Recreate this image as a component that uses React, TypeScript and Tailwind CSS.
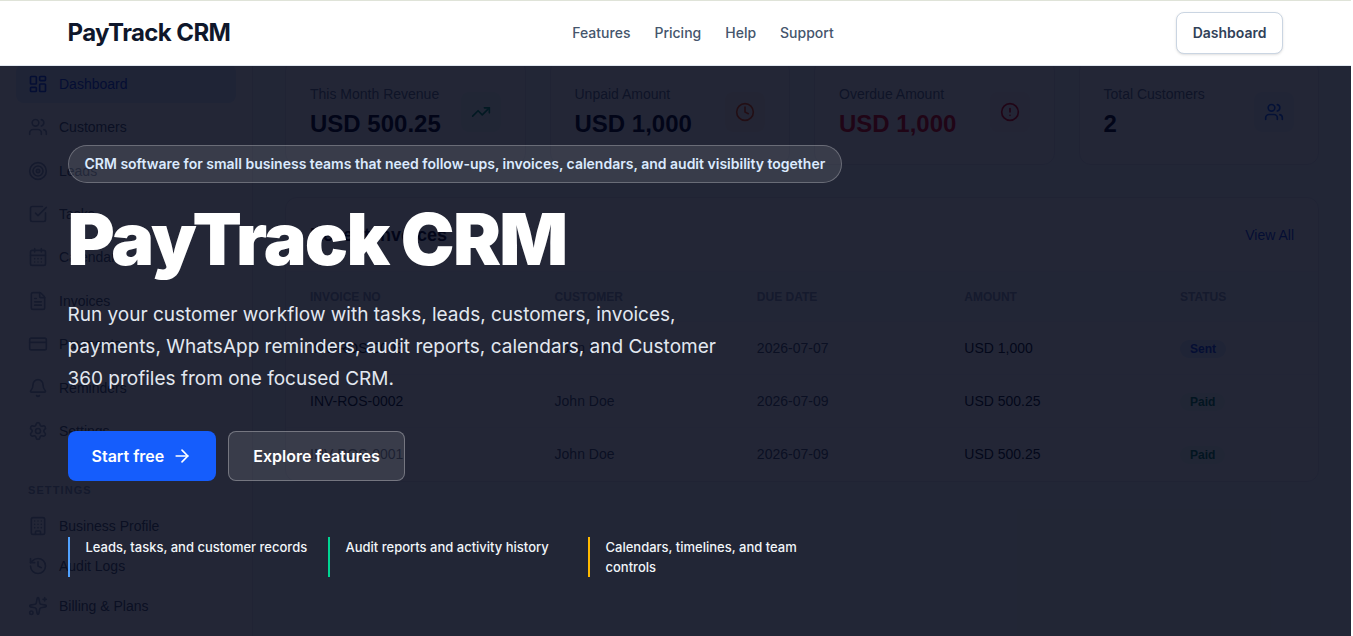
import {
    ArrowRight,
    Bell,
    Building,
    CalendarDays,
    CircleAlert,
    Clock,
    CreditCard,
    FileText,
    History,
    LayoutDashboard,
    Settings,
    Sparkles,
    SquareCheckBig,
    Target,
    TrendingUp,
    Users,
} from 'lucide-react'

const navLinks = ['Features', 'Pricing', 'Help', 'Support']

const sidebarItems = [
    { label: 'Dashboard', icon: LayoutDashboard, active: true },
    { label: 'Customers', icon: Users },
    { label: 'Leads', icon: Target },
    { label: 'Tasks', icon: SquareCheckBig },
    { label: 'Calendar', icon: CalendarDays },
    { label: 'Invoices', icon: FileText },
    { label: 'Payments', icon: CreditCard },
    { label: 'Reminders', icon: Bell },
    { label: 'Settings', icon: Settings },
]

const settingsItems = [
    { label: 'Business Profile', icon: Building },
    { label: 'Audit Logs', icon: History },
    { label: 'Billing & Plans', icon: Sparkles },
]

const stats = [
    { label: 'This Month Revenue', value: 'USD 500.25', icon: TrendingUp, valueClass: 'text-slate-950', iconClass: 'bg-emerald-50 text-emerald-600' },
    { label: 'Unpaid Amount', value: 'USD 1,000', icon: Clock, valueClass: 'text-slate-950', iconClass: 'bg-orange-50 text-orange-600' },
    { label: 'Overdue Amount', value: 'USD 1,000', icon: CircleAlert, valueClass: 'text-red-600', iconClass: 'bg-red-50 text-red-600' },
    { label: 'Total Customers', value: '2', icon: Users, valueClass: 'text-slate-950', iconClass: 'bg-blue-50 text-blue-600' },
]

const invoices = [
    { no: 'INV-ROS-0003', customer: 'John Doe', due: '2026-07-07', amount: 'USD 1,000', status: 'Sent' },
    { no: 'INV-ROS-0002', customer: 'John Doe', due: '2026-07-09', amount: 'USD 500.25', status: 'Paid' },
    { no: 'INV-ROS-0001', customer: 'John Doe', due: '2026-07-09', amount: 'USD 500.25', status: 'Paid' },
]

const highlights = [
    { text: 'Leads, tasks, and customer records', border: 'border-[#51a2ff]' },
    { text: 'Audit reports and activity history', border: 'border-[#00d492]' },
    { text: 'Calendars, timelines, and team controls', border: 'border-[#ffb900]' },
]

function Header() {
    return (
        <header className="border-t border-b border-t-[#dfe3d8] border-b-slate-200 bg-white">
            <div className="mx-auto flex h-16 max-w-7xl items-center justify-between px-8">
                <a href="#" className="text-2xl font-bold tracking-tight text-slate-900">
                    PayTrack CRM
                </a>
                <nav className="flex items-center gap-6">
                    {navLinks.map((link) => (
                        <a key={link} href="#" className="text-sm font-medium text-slate-600">
                            {link}
                        </a>
                    ))}
                </nav>
                <a
                    href="#"
                    className="rounded-lg border border-slate-300 bg-white px-4 py-2.5 text-sm font-semibold text-slate-700 shadow-sm"
                >
                    Dashboard
                </a>
            </div>
        </header>
    )
}

function Sidebar() {
    return (
        <div className="w-[253px] shrink-0 border-r border-slate-200 bg-white px-4">
            <ul className="-mt-1 flex h-[391px] flex-col">
                {sidebarItems.map(({ label, icon: Icon, active }) => (
                    <li key={label} className="flex flex-1 py-0.5">
                        <div
                            className={`flex flex-1 items-center gap-[11px] rounded-lg px-3 ${
                                active ? 'bg-blue-100 text-blue-700' : 'text-slate-600'
                            }`}
                        >
                            <Icon className={active ? 'size-5' : 'size-5 text-slate-400'} />
                            {label}
                        </div>
                    </li>
                ))}
            </ul>
            <p className="mt-[27px] px-3 text-[11px] leading-5 font-bold tracking-widest text-slate-400">SETTINGS</p>
            <ul className="mt-1.5">
                {settingsItems.map(({ label, icon: Icon }) => (
                    <li key={label} className="flex h-10 items-center gap-[11px] px-3 text-slate-600">
                        <Icon className="size-5 text-slate-400" />
                        {label}
                    </li>
                ))}
            </ul>
        </div>
    )
}

function InvoiceTable() {
    return (
        <div className="mt-8 overflow-hidden rounded-xl border border-slate-200 bg-white">
            <div className="flex h-[73px] items-center justify-between px-6">
                <p className="text-lg font-bold text-slate-950">Recent Invoices</p>
                <p className="text-blue-700">View All</p>
            </div>
            <table className="w-full table-fixed text-left">
                <colgroup>
                    <col className="w-[23.7%]" />
                    <col className="w-[19.6%]" />
                    <col className="w-[20.1%]" />
                    <col className="w-[20.9%]" />
                    <col className="w-[15.7%]" />
                </colgroup>
                <thead className="bg-slate-50 text-xs text-slate-400">
                    <tr className="h-[50px] border-y border-slate-100">
                        <th className="px-6">INVOICE NO</th>
                        <th className="px-6">CUSTOMER</th>
                        <th className="px-6">DUE DATE</th>
                        <th className="px-6">AMOUNT</th>
                        <th className="px-6">STATUS</th>
                    </tr>
                </thead>
                <tbody className="divide-y divide-slate-100 text-slate-600">
                    {invoices.map((invoice) => (
                        <tr key={invoice.no} className="h-[53px]">
                            <td className="px-6 text-slate-900">{invoice.no}</td>
                            <td className="px-6">{invoice.customer}</td>
                            <td className="px-6">{invoice.due}</td>
                            <td className="px-6 text-slate-900">{invoice.amount}</td>
                            <td className="px-6">
                                <span
                                    className={`rounded-full px-2.5 py-0.5 text-xs font-bold ${
                                        invoice.status === 'Sent' ? 'bg-blue-100 text-blue-700' : 'bg-emerald-50 text-emerald-700'
                                    }`}
                                >
                                    {invoice.status}
                                </span>
                            </td>
                        </tr>
                    ))}
                </tbody>
            </table>
        </div>
    )
}

// Product preview that sits dimmed behind the hero copy
function DashboardPreview() {
    return (
        <div
            aria-hidden="true"
            className="absolute inset-0 flex overflow-hidden bg-slate-50 font-['Liberation_Sans',Arial,sans-serif] text-sm"
        >
            <Sidebar />
            <div className="flex-1 px-8">
                <div className="-mt-[7px] grid grid-cols-4 gap-6">
                    {stats.map(({ label, value, icon: Icon, valueClass, iconClass }) => (
                        <div
                            key={label}
                            className="flex items-center justify-between rounded-xl border border-slate-200 bg-white p-6"
                        >
                            <div>
                                <p className="text-slate-500">{label}</p>
                                <p className={`mt-1 text-2xl font-bold ${valueClass}`}>{value}</p>
                            </div>
                            <div className={`flex size-10 items-center justify-center rounded-lg ${iconClass}`}>
                                <Icon className="size-5" />
                            </div>
                        </div>
                    ))}
                </div>
                <InvoiceTable />
            </div>
        </div>
    )
}

function Hero() {
    return (
        <section className="relative min-h-[calc(100vh-66px)]">
            <DashboardPreview />
            <div className="absolute inset-0 bg-slate-950/87" />
            <div className="relative mx-auto max-w-7xl px-8 pt-[79px] pb-14">
                <p className="w-fit rounded-full border border-white/25 bg-white/10 px-4 py-2 text-sm font-semibold text-blue-100">
                    CRM software for small business teams that need follow-ups, invoices, calendars, and audit visibility
                    together
                </p>
                <h1 className="mt-5 text-7xl leading-none font-black tracking-tight text-white">PayTrack CRM</h1>
                <p className="mt-6 max-w-2xl text-[19px] leading-8 text-slate-200">
                    Run your customer workflow with tasks, leads, customers, invoices, payments, WhatsApp reminders, audit
                    reports, calendars, and Customer 360 profiles from one focused CRM.
                </p>
                <div className="mt-9 flex gap-3">
                    <a
                        href="#"
                        className="flex items-center gap-2 rounded-lg bg-[#155dfc] px-6 py-[13px] font-semibold text-white"
                    >
                        Start free
                        <ArrowRight className="size-5" />
                    </a>
                    <a
                        href="#"
                        className="rounded-lg border border-white/30 bg-white/10 px-6 py-3 font-semibold text-white"
                    >
                        Explore features
                    </a>
                </div>
                <ul className="mt-14 grid max-w-3xl grid-cols-3 gap-3 text-[13px] leading-5 font-medium text-slate-100">
                    {highlights.map((item) => (
                        <li key={item.text} className={`border-l-2 pl-4 ${item.border}`}>
                            {item.text}
                        </li>
                    ))}
                </ul>
            </div>
        </section>
    )
}

export default function App() {
    return (
        <div className="mr-0.5 min-h-screen bg-white font-[Inter,sans-serif]">
            <Header />
            <Hero />
        </div>
    )
}
